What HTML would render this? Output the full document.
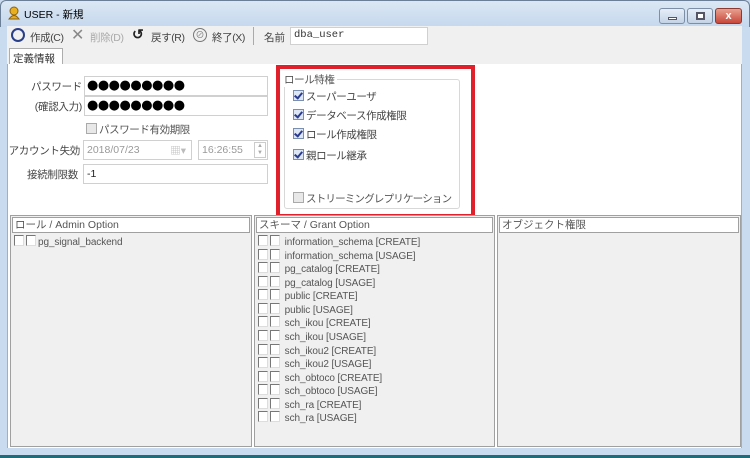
<!DOCTYPE html>
<html><head><meta charset="utf-8"><style>
*{margin:0;padding:0;box-sizing:border-box}
body{width:750px;height:458px;overflow:hidden;background:#c9dbee;font-family:"Liberation Sans","Noto Sans CJK JP",sans-serif;font-size:10.5px;color:#222;position:relative}
.a{position:absolute;white-space:nowrap}
.title{left:0;top:0;width:750px;height:27px;background:linear-gradient(#dbe7f4,#c5d8ed);border:1px solid #6b7f96;border-bottom:none;border-radius:6px 6px 0 0}
.tb{left:7px;top:26px;width:735px;height:22px;background:#f0f0f0}
.tabs{left:7px;top:46px;width:735px;height:19px;background:#f0f0f0;border-bottom:1px solid #adadad}
.page{left:7px;top:64px;width:735px;height:384px;background:#fff;border-left:1px solid #adadad;border-right:1px solid #adadad}
.inp{background:#fff;border:1px solid #d0d0d0;height:20px;padding:3px 3px;font-size:10.5px}
.lbl{text-align:right;font-size:10.5px;color:#444;letter-spacing:-0.3px}
.cb{display:inline-block;width:11px;height:11px;border:1px solid #8a8a8a;background:#fff;vertical-align:-1px;margin-right:2px}
.cbc{background:#dde6f4;border-color:#7a8fb0;position:relative}
.cbc:after{content:"";position:absolute;left:2px;top:0px;width:3px;height:6px;border:solid #2a3b8f;border-width:0 2px 2px 0;transform:rotate(40deg)}
.list{background:#f0f0f0;border:1px solid #a0a0a0}
.lh{position:absolute;left:1px;right:1px;top:1px;height:16px;background:#fff;border:1px solid #a0a0a0;padding-left:2px;line-height:14px;color:#555;font-size:10.5px}
.row{position:absolute;left:3px;height:14px;line-height:13px;white-space:nowrap;color:#555;font-size:10px;letter-spacing:-0.1px}
.sq{display:inline-block;width:10px;height:11px;border:1px solid #777;border-right-color:#ddd;border-bottom-color:#ddd;background:#fff;vertical-align:-1px;margin-right:2px}
.pw{font-family:"DejaVu Sans",sans-serif;font-size:13px;line-height:14px;padding:2px 2px;letter-spacing:-0.5px;color:#000}
.jp{letter-spacing:-0.4px}
</style></head><body>
<div class="a title"></div>
<div class="a" style="left:8px;top:6px;width:12px;height:14px"><svg width="12" height="14"><circle cx="6" cy="5" r="4" fill="#e8b020" stroke="#8a6010"/><path d="M1 13 Q6 6 11 13Z" fill="#e8b020" stroke="#8a6010"/></svg></div>
<div class="a" style="left:24px;top:7px;color:#000">USER - 新規</div>
<div class="a" style="left:659px;top:8px;width:26px;height:16px;border:1px solid #7d8fa6;border-radius:3px;background:linear-gradient(#e6eef8,#c3d3e6)"><div class="a" style="left:8px;top:8px;width:9px;height:3px;background:#fff;border:1px solid #556"></div></div>
<div class="a" style="left:687px;top:8px;width:26px;height:16px;border:1px solid #7d8fa6;border-radius:3px;background:linear-gradient(#e6eef8,#c3d3e6)"><div class="a" style="left:8px;top:3px;width:9px;height:8px;border:2px solid #556;background:#fff"></div></div>
<div class="a" style="left:715px;top:8px;width:27px;height:16px;border:1px solid #8a3a30;border-radius:3px;background:linear-gradient(#e8a090,#c8473a);color:#fff;font-weight:bold;text-align:center;line-height:14px;font-size:11px">x</div>
<div class="a tb"></div>
<div class="a" style="left:11px;top:28px;width:14px;height:14px;border:2px solid #2a3f8a;border-radius:50%"></div>
<div class="a jp" style="left:30px;top:30px;color:#444">作成(C)</div>
<div class="a" style="left:71px;top:25px;font-size:16px;color:#888">✕</div>
<div class="a jp" style="left:90px;top:30px;color:#aaa">削除(D)</div>
<div class="a" style="left:132px;top:26px;font-size:14px;font-weight:bold;color:#222">↺</div>
<div class="a jp" style="left:151px;top:30px;color:#444">戻す(R)</div>
<div class="a" style="left:193px;top:28px;width:14px;height:14px;border:1px solid #777;border-radius:50%;color:#777;font-size:9px;text-align:center;line-height:12px">⊘</div>
<div class="a jp" style="left:212px;top:30px;color:#444">終了(X)</div>
<div class="a" style="left:253px;top:27px;width:1px;height:18px;background:#aaa"></div>
<div class="a" style="left:264px;top:30px;color:#444">名前</div>
<div class="a inp" style="left:290px;top:27px;width:138px;height:18px;font-family:'Liberation Mono',monospace;padding:1px 3px;color:#333">dba_user</div>
<div class="a tabs"></div>
<div class="a" style="left:9px;top:48px;width:54px;height:17px;background:#fff;border:1px solid #adadad;border-bottom:none;padding:2px 3px;color:#333">定義情報</div>
<div class="a page"></div>
<div class="a lbl" style="left:4px;top:79px;width:78px">パスワード</div>
<div class="a inp pw" style="left:84px;top:76px;width:184px">●●●●●●●●●</div>
<div class="a lbl" style="left:4px;top:99px;width:78px">(確認入力)</div>
<div class="a inp pw" style="left:84px;top:96px;width:184px">●●●●●●●●●</div>
<div class="a jp" style="left:86px;top:122px;color:#555"><span class="cb" style="background:#e8e8e8;border-color:#aaa"></span>パスワード有効期限</div>
<div class="a lbl" style="left:4px;top:143px;width:76px">アカウント失効</div>
<div class="a inp" style="left:83px;top:140px;width:109px;color:#999">2018/07/23<span style="position:absolute;right:5px;top:2px;color:#bbb">▦▾</span></div>
<div class="a inp" style="left:198px;top:140px;width:70px;color:#999">16:26:55<span style="position:absolute;right:1px;top:1px;width:12px;height:16px;border:1px solid #ccc;font-size:6px;line-height:7px;text-align:center;color:#aaa">▲<br>▼</span></div>
<div class="a lbl" style="left:4px;top:167px;width:74px">接続制限数</div>
<div class="a inp" style="left:83px;top:164px;width:185px">-1</div>
<div class="a" style="left:276px;top:65px;width:199px;height:153px;border:4px solid #e0202a"></div>
<div class="a" style="left:284px;top:79px;width:176px;height:130px;border:1px solid #d8d8d8;border-radius:3px"></div>
<div class="a jp" style="left:284px;top:72px;background:#fff;padding-right:2px;color:#555">ロール特権</div>
<div class="a jp" style="left:293px;top:89px;color:#444"><span class="cb cbc"></span>スーパーユーザ</div>
<div class="a jp" style="left:293px;top:108px;color:#444"><span class="cb cbc"></span>データベース作成権限</div>
<div class="a jp" style="left:293px;top:127px;color:#444"><span class="cb cbc"></span>ロール作成権限</div>
<div class="a jp" style="left:293px;top:148px;color:#444"><span class="cb cbc"></span>親ロール継承</div>
<div class="a" style="left:293px;top:191px;color:#555;letter-spacing:-0.8px"><span class="cb" style="background:#e8e8e8;border-color:#aaa"></span>ストリーミングレプリケーション</div>
<div class="a list" style="left:10px;top:215px;width:242px;height:232px"><div class="lh">ロール / Admin Option</div>
<div class="row" style="top:19px"><span class="sq"></span><span class="sq"></span>pg_signal_backend</div></div>
<div class="a list" style="left:254px;top:215px;width:241px;height:232px"><div class="lh">スキーマ / Grant Option</div>
<div class="row" style="top:19px"><span class="sq"></span><span class="sq"></span> information_schema [CREATE]</div>
<div class="row" style="top:33px"><span class="sq"></span><span class="sq"></span> information_schema [USAGE]</div>
<div class="row" style="top:46px"><span class="sq"></span><span class="sq"></span> pg_catalog [CREATE]</div>
<div class="row" style="top:60px"><span class="sq"></span><span class="sq"></span> pg_catalog [USAGE]</div>
<div class="row" style="top:73px"><span class="sq"></span><span class="sq"></span> public [CREATE]</div>
<div class="row" style="top:87px"><span class="sq"></span><span class="sq"></span> public [USAGE]</div>
<div class="row" style="top:100px"><span class="sq"></span><span class="sq"></span> sch_ikou [CREATE]</div>
<div class="row" style="top:114px"><span class="sq"></span><span class="sq"></span> sch_ikou [USAGE]</div>
<div class="row" style="top:128px"><span class="sq"></span><span class="sq"></span> sch_ikou2 [CREATE]</div>
<div class="row" style="top:141px"><span class="sq"></span><span class="sq"></span> sch_ikou2 [USAGE]</div>
<div class="row" style="top:155px"><span class="sq"></span><span class="sq"></span> sch_obtoco [CREATE]</div>
<div class="row" style="top:168px"><span class="sq"></span><span class="sq"></span> sch_obtoco [USAGE]</div>
<div class="row" style="top:182px"><span class="sq"></span><span class="sq"></span> sch_ra [CREATE]</div>
<div class="row" style="top:195px"><span class="sq"></span><span class="sq"></span> sch_ra [USAGE]</div></div>
<div class="a list" style="left:497px;top:215px;width:244px;height:232px"><div class="lh">オブジェクト権限</div></div>
<div class="a" style="left:0;top:455px;width:750px;height:3px;background:#1f6b78"></div>
</body></html>
